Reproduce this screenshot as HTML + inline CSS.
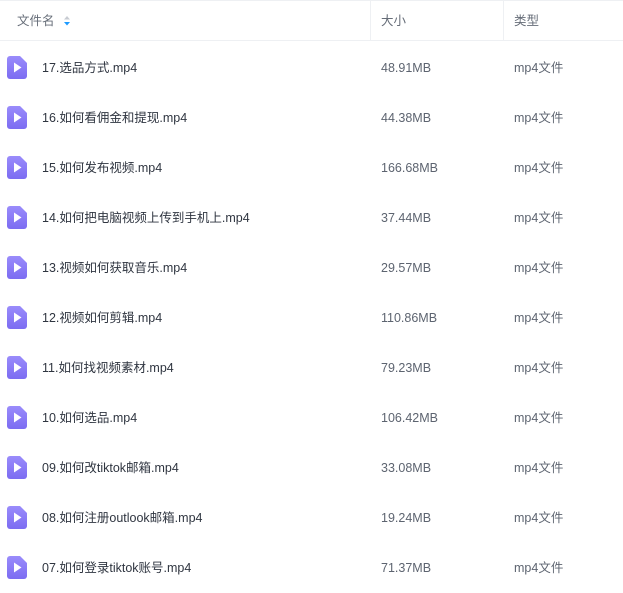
<!DOCTYPE html>
<html><head><meta charset="utf-8"><style>
body{margin:0;width:623px;height:591px;overflow:hidden;background:#fff;font-family:"Liberation Sans","Noto Sans CJK SC",sans-serif;font-size:12.5px;line-height:16px;color:#454d5a}
span{display:block;line-height:16px;white-space:nowrap}
.hdr{position:absolute;top:0;left:0;width:623px;height:41px;border-top:1px solid #eef0f3;border-bottom:1px solid #eef0f3;box-sizing:border-box;color:#666d78}
.hdr span{position:absolute;top:12px}
.div{position:absolute;top:1px;width:1px;height:39px;background:#eef0f3}
.row{position:absolute;left:0;width:623px;height:50px}
.row .n{position:absolute;left:42px;top:17px;color:#2f3540}
.row .s{position:absolute;left:381px;top:17px;color:#5d6470}
.row .t{position:absolute;left:514px;top:17px;color:#5d6470}
.ic{position:absolute;left:7px;top:13px}
</style></head><body>
<div class="hdr"><span style="left:17px">文件名</span>
<svg style="position:absolute;left:63px;top:14px" width="8" height="12"><path d="M1 4.5L4 1L7 4.5Z" fill="#c7cbd2"/><path d="M1 7L4 10.5L7 7Z" fill="#1e9bff"/></svg>
<span style="left:381px">大小</span><span style="left:514px">类型</span></div>
<div class="div" style="left:370px"></div><div class="div" style="left:503px"></div>
<svg width="0" height="0" style="position:absolute"><defs><linearGradient id="g" x1="0" y1="0" x2="0" y2="1"><stop offset="0" stop-color="#9a8cfb"/><stop offset="1" stop-color="#7c6cf2"/></linearGradient></defs></svg>
<div class="row" style="top:43px"><svg class="ic" width="20" height="23"><path d="M3 0H13L20 7V20A3 3 0 0 1 17 23H3A3 3 0 0 1 0 20V3A3 3 0 0 1 3 0Z" fill="url(#g)"/><path d="M7 6.5L14.5 11.5L7 16.5Z" fill="#fff"/></svg><span class="n">17.选品方式.mp4</span><span class="s">48.91MB</span><span class="t">mp4文件</span></div>
<div class="row" style="top:93px"><svg class="ic" width="20" height="23"><path d="M3 0H13L20 7V20A3 3 0 0 1 17 23H3A3 3 0 0 1 0 20V3A3 3 0 0 1 3 0Z" fill="url(#g)"/><path d="M7 6.5L14.5 11.5L7 16.5Z" fill="#fff"/></svg><span class="n">16.如何看佣金和提现.mp4</span><span class="s">44.38MB</span><span class="t">mp4文件</span></div>
<div class="row" style="top:143px"><svg class="ic" width="20" height="23"><path d="M3 0H13L20 7V20A3 3 0 0 1 17 23H3A3 3 0 0 1 0 20V3A3 3 0 0 1 3 0Z" fill="url(#g)"/><path d="M7 6.5L14.5 11.5L7 16.5Z" fill="#fff"/></svg><span class="n">15.如何发布视频.mp4</span><span class="s">166.68MB</span><span class="t">mp4文件</span></div>
<div class="row" style="top:193px"><svg class="ic" width="20" height="23"><path d="M3 0H13L20 7V20A3 3 0 0 1 17 23H3A3 3 0 0 1 0 20V3A3 3 0 0 1 3 0Z" fill="url(#g)"/><path d="M7 6.5L14.5 11.5L7 16.5Z" fill="#fff"/></svg><span class="n">14.如何把电脑视频上传到手机上.mp4</span><span class="s">37.44MB</span><span class="t">mp4文件</span></div>
<div class="row" style="top:243px"><svg class="ic" width="20" height="23"><path d="M3 0H13L20 7V20A3 3 0 0 1 17 23H3A3 3 0 0 1 0 20V3A3 3 0 0 1 3 0Z" fill="url(#g)"/><path d="M7 6.5L14.5 11.5L7 16.5Z" fill="#fff"/></svg><span class="n">13.视频如何获取音乐.mp4</span><span class="s">29.57MB</span><span class="t">mp4文件</span></div>
<div class="row" style="top:293px"><svg class="ic" width="20" height="23"><path d="M3 0H13L20 7V20A3 3 0 0 1 17 23H3A3 3 0 0 1 0 20V3A3 3 0 0 1 3 0Z" fill="url(#g)"/><path d="M7 6.5L14.5 11.5L7 16.5Z" fill="#fff"/></svg><span class="n">12.视频如何剪辑.mp4</span><span class="s">110.86MB</span><span class="t">mp4文件</span></div>
<div class="row" style="top:343px"><svg class="ic" width="20" height="23"><path d="M3 0H13L20 7V20A3 3 0 0 1 17 23H3A3 3 0 0 1 0 20V3A3 3 0 0 1 3 0Z" fill="url(#g)"/><path d="M7 6.5L14.5 11.5L7 16.5Z" fill="#fff"/></svg><span class="n">11.如何找视频素材.mp4</span><span class="s">79.23MB</span><span class="t">mp4文件</span></div>
<div class="row" style="top:393px"><svg class="ic" width="20" height="23"><path d="M3 0H13L20 7V20A3 3 0 0 1 17 23H3A3 3 0 0 1 0 20V3A3 3 0 0 1 3 0Z" fill="url(#g)"/><path d="M7 6.5L14.5 11.5L7 16.5Z" fill="#fff"/></svg><span class="n">10.如何选品.mp4</span><span class="s">106.42MB</span><span class="t">mp4文件</span></div>
<div class="row" style="top:443px"><svg class="ic" width="20" height="23"><path d="M3 0H13L20 7V20A3 3 0 0 1 17 23H3A3 3 0 0 1 0 20V3A3 3 0 0 1 3 0Z" fill="url(#g)"/><path d="M7 6.5L14.5 11.5L7 16.5Z" fill="#fff"/></svg><span class="n">09.如何改tiktok邮箱.mp4</span><span class="s">33.08MB</span><span class="t">mp4文件</span></div>
<div class="row" style="top:493px"><svg class="ic" width="20" height="23"><path d="M3 0H13L20 7V20A3 3 0 0 1 17 23H3A3 3 0 0 1 0 20V3A3 3 0 0 1 3 0Z" fill="url(#g)"/><path d="M7 6.5L14.5 11.5L7 16.5Z" fill="#fff"/></svg><span class="n">08.如何注册outlook邮箱.mp4</span><span class="s">19.24MB</span><span class="t">mp4文件</span></div>
<div class="row" style="top:543px"><svg class="ic" width="20" height="23"><path d="M3 0H13L20 7V20A3 3 0 0 1 17 23H3A3 3 0 0 1 0 20V3A3 3 0 0 1 3 0Z" fill="url(#g)"/><path d="M7 6.5L14.5 11.5L7 16.5Z" fill="#fff"/></svg><span class="n">07.如何登录tiktok账号.mp4</span><span class="s">71.37MB</span><span class="t">mp4文件</span></div>
</body></html>
